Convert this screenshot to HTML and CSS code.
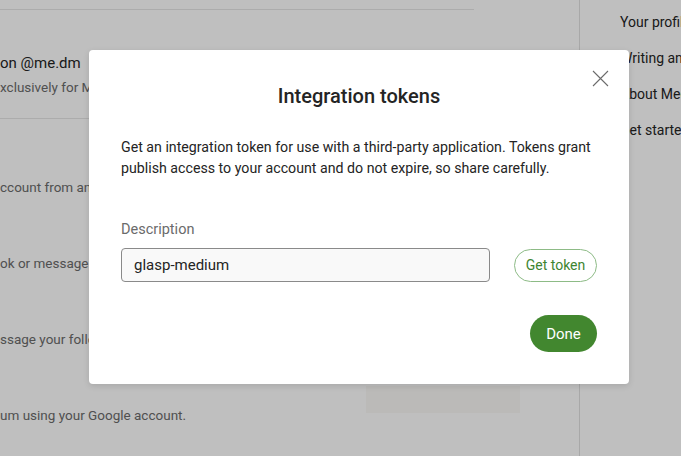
FILE: index.html
```html
<!DOCTYPE html>
<html>
<head>
<meta charset="utf-8">
<link rel="stylesheet" href="styles.css">
</head>
<body>
<div class="page">
  <main class="main">
    <div class="rule top-rule"></div>
    <div class="row first-row">
      <div class="row-text">
        <div class="row-title">on @me.dm</div>
        <div class="row-sub">xclusively for Medium members</div>
      </div>
      <span class="row-icon"></span>
    </div>
    <div class="rule"></div>
    <div class="row-sub item item-1">ccount from another platform</div>
    <div class="row-sub item">ok or message your followers</div>
    <div class="row-sub item">ssage your followers</div>
    <div class="row-sub item">um using your Google account.</div>
    <div class="ghost-box"></div>
  </main>
  <aside class="side">
    <div class="side-link">Your profile</div>
    <div class="side-link">Writing and publishing</div>
    <div class="side-link">About Medium</div>
    <div class="side-link">Get started</div>
  </aside>
</div>
<div class="overlay"></div>
<div class="modal">
  <button class="close" aria-label="Close">
    <svg width="17" height="17" viewBox="0 0 17 17"><path d="M1 1 L16 16 M16 1 L1 16" stroke="#6b6b6b" stroke-width="1.1" fill="none"/></svg>
  </button>
  <h2 class="modal-title">Integration tokens</h2>
  <p class="modal-text">Get an integration token for use with a third-party application. Tokens grant publish access to your account and do not expire, so share carefully.</p>
  <label class="label">Description</label>
  <div class="field-row">
    <div class="input">glasp-medium</div>
    <button class="btn-outline">Get token</button>
  </div>
  <div class="actions">
    <button class="btn-done">Done</button>
  </div>
</div>
</body>
</html>
```
FILE: styles.css
```css
* { box-sizing: border-box; }
html, body { margin: 0; padding: 0; }
body {
  width: 681px;
  height: 456px;
  overflow: hidden;
  background: #ffffff;
  font-family: Roboto, "Noto Sans", "Liberation Sans", sans-serif;
  color: #242424;
  position: relative;
}
.page {
  display: flex;
  height: 456px;
}
.main {
  width: 579px;
  padding-right: 105px;
  white-space: nowrap;
  overflow: hidden;
  position: relative;
}
.rule { height: 1px; background: #e6e6e6; }
.top-rule { margin-top: 9px; }
.row {
  display: flex;
  justify-content: space-between;
  align-items: flex-start;
  height: 108px;
  padding-top: 43px;
}
.row-title { font-size: 15px; line-height: 20px; color: #242424; }
.row-sub { font-size: 13.5px; line-height: 20px; color: #6b6b6b; margin-top: 4px; }
.row-icon {
  width: 7px; height: 2px; background: #333; margin-top: 5px;
}
.item { margin-top: 56px; }
.item-1 { margin-top: 58px; }
.ghost-box {
  position: absolute;
  left: 366px; top: 386px; width: 154px; height: 27px;
  background: #faf8f6;
}
.side {
  flex: 1;
  border-left: 1px solid #e0e0e0;
  padding-left: 40px;
  padding-top: 12px;
  white-space: nowrap;
  overflow: hidden;
}
.side-link { font-size: 14px; line-height: 20px; color: #242424; margin-bottom: 16px; }
.overlay {
  position: absolute;
  inset: 0;
  background: rgba(0,0,0,0.25);
}
.modal {
  position: absolute;
  left: 89px; top: 50px;
  width: 540px; height: 334px;
  background: #fff;
  border-radius: 4px;
  box-shadow: 0 2px 6px rgba(0,0,0,0.12);
  padding: 0 32px;
}
.close {
  position: absolute;
  right: 20px; top: 20px;
  width: 17px; height: 17px;
  padding: 0; border: 0; background: none;
  display: block;
}
.close svg { display: block; }
.modal-title {
  margin: 0;
  padding-top: 33px;
  text-align: center;
  font-size: 20px;
  line-height: 26px;
  font-weight: 500;
  color: #242424;
}
.modal-text {
  margin: 28px 0 0;
  font-size: 14.2px;
  line-height: 21px;
  color: #242424;
}
.label {
  display: block;
  margin-top: 41px;
  font-size: 14.5px;
  line-height: 20px;
  color: #6b6b6b;
}
.field-row {
  display: flex;
  align-items: center;
  gap: 24px;
  margin-top: 8px;
}
.input {
  width: 369px;
  flex-shrink: 0;
  height: 34px;
  border: 1px solid #8a8a8a;
  border-radius: 4px;
  background: #f9f9f9;
  padding: 0 12px;
  font-size: 15px;
  line-height: 32px;
  color: #242424;
}
.btn-outline {
  height: 33px;
  width: 83px;
  flex-shrink: 0;
  padding: 0;
  white-space: nowrap;
  border: 1px solid #8dbb86;
  border-radius: 17px;
  background: #fff;
  color: #3e8531;
  font-family: inherit;
  font-size: 14px;
}
.actions {
  display: flex;
  justify-content: flex-end;
  margin-top: 33px;
}
.btn-done {
  height: 37px;
  width: 67px;
  border: 0;
  border-radius: 19px;
  background: #42872f;
  color: #fff;
  font-family: inherit;
  font-size: 15px;
}
```
